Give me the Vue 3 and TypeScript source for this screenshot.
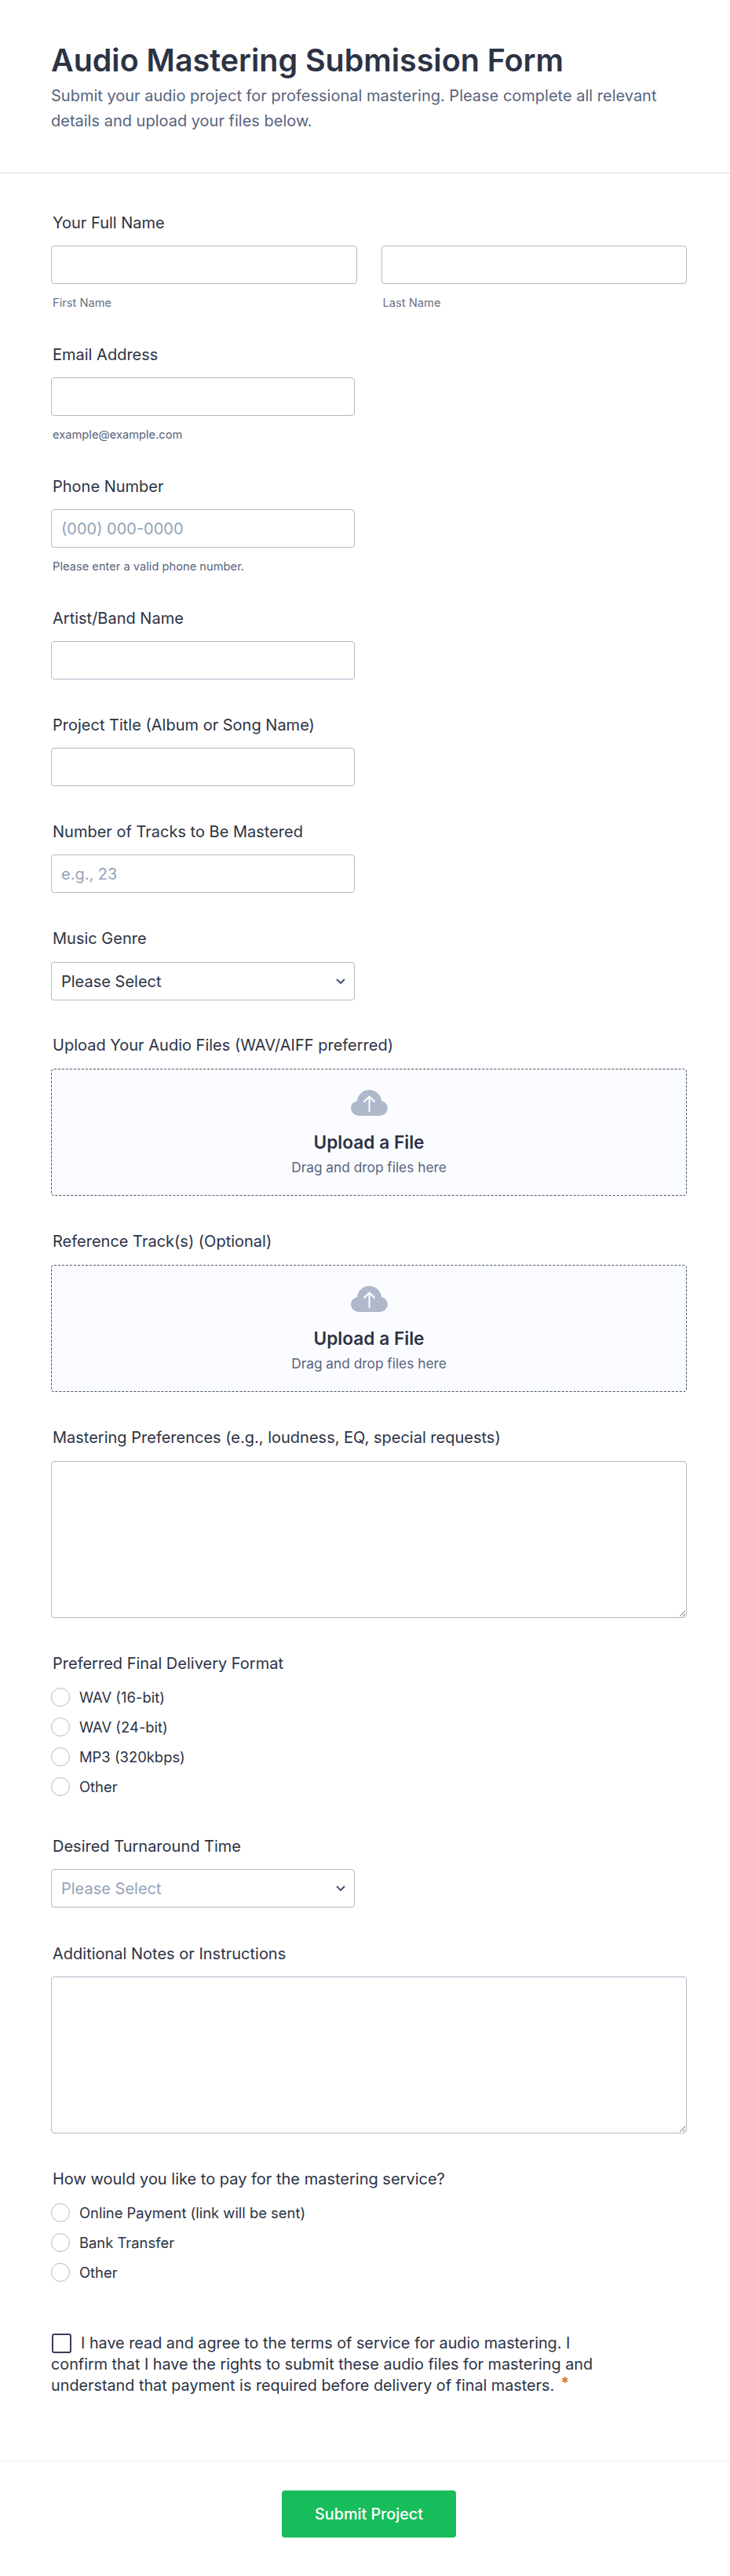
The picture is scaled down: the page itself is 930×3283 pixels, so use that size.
<script setup lang="ts">
const formatOptions = ['WAV (16-bit)', 'WAV (24-bit)', 'MP3 (320kbps)', 'Other']
const paymentOptions = ['Online Payment (link will be sent)', 'Bank Transfer', 'Other']
const uploads = ['Upload Your Audio Files (WAV/AIFF preferred)', 'Reference Track(s) (Optional)']
const cloud = 'M10 33A10 10 0 0 1 0 23.500 10 10 0 0 1 8 14 15.500 15.500 0 0 1 23.500 0 15.500 15.500 0 0 1 39 14 10 10 0 0 1 47 23.500 10 10 0 0 1 37 33Z'
</script>

<template>
  <div class="form">
    <header class="head">
      <h1>Audio Mastering Submission Form</h1>
      <p>Submit your audio project for professional mastering. Please complete all relevant details and upload your files below.</p>
    </header>

    <main class="body">
      <section class="field">
        <label>Your Full Name</label>
        <div class="name-row">
          <div class="name-col">
            <input type="text" />
            <small>First Name</small>
          </div>
          <div class="name-col">
            <input type="text" />
            <small>Last Name</small>
          </div>
        </div>
      </section>

      <section class="field">
        <label>Email Address</label>
        <input class="short" type="email" />
        <small class="blue">example@example.com</small>
      </section>

      <section class="field">
        <label>Phone Number</label>
        <input class="short" type="tel" placeholder="(000) 000-0000" />
        <small class="blue">Please enter a valid phone number.</small>
      </section>

      <section class="field">
        <label>Artist/Band Name</label>
        <input class="short" type="text" />
      </section>

      <section class="field">
        <label>Project Title (Album or Song Name)</label>
        <input class="short" type="text" />
      </section>

      <section class="field">
        <label>Number of Tracks to Be Mastered</label>
        <input class="short" type="text" placeholder="e.g., 23" />
      </section>

      <section class="field tight">
        <label class="far">Music Genre</label>
        <div class="select-wrap">
          <select>
            <option>Please Select</option>
          </select>
          <svg class="chevron" width="14" height="9" viewBox="0 0 14 9">
            <path d="M2 2l5 5 5-5" fill="none" stroke="#4a5a78" stroke-width="2.200" />
          </svg>
        </div>
      </section>

      <section v-for="title in uploads" :key="title" class="field">
        <label class="far">{{ title }}</label>
        <div class="drop">
          <svg width="47" height="33" viewBox="0 0 47 33">
            <defs>
              <pattern id="dots" width="5" height="5" patternUnits="userSpaceOnUse">
                <rect x="2" y="2" width="1" height="1" fill="#8fb3dc" />
              </pattern>
            </defs>
            <path :d="cloud" fill="#b0b8c9" />
            <path :d="cloud" fill="url(#dots)" />
            <path d="M23.500 28V9M16.500 15.500l7-7 7 7" fill="none" stroke="#fff" stroke-width="2" />
          </svg>
          <strong>Upload a File</strong>
          <span>Drag and drop files here</span>
        </div>
      </section>

      <section class="field">
        <label class="far">Mastering Preferences (e.g., loudness, EQ, special requests)</label>
        <textarea></textarea>
      </section>

      <section class="field">
        <label>Preferred Final Delivery Format</label>
        <div class="radios">
          <div v-for="opt in formatOptions" :key="opt" class="radio">
            <i></i>
            <span>{{ opt }}</span>
          </div>
        </div>
      </section>

      <section class="field wide">
        <label>Desired Turnaround Time</label>
        <div class="select-wrap">
          <select class="muted">
            <option>Please Select</option>
          </select>
          <svg class="chevron" width="14" height="9" viewBox="0 0 14 9">
            <path d="M2 2l5 5 5-5" fill="none" stroke="#4a5a78" stroke-width="2.200" />
          </svg>
        </div>
      </section>

      <section class="field">
        <label>Additional Notes or Instructions</label>
        <textarea></textarea>
      </section>

      <section class="field">
        <label>How would you like to pay for the mastering service?</label>
        <div class="radios">
          <div v-for="opt in paymentOptions" :key="opt" class="radio">
            <i></i>
            <span>{{ opt }}</span>
          </div>
        </div>
      </section>

      <p class="terms">
        <i class="box"></i>I have read and agree to the terms of service for audio mastering. I confirm that I have the rights to submit these audio files for mastering and understand that payment is required before delivery of final masters.<span class="req">*</span>
      </p>
    </main>

    <footer class="foot">
      <button type="button">Submit Project</button>
    </footer>
  </div>
</template>

<style>
body {
  background: #fff;
}
</style>

<style scoped>
.form {
  font-family: Inter, "Liberation Sans", sans-serif;
  color: #2c3345;
  width: 930px;
  height: 3283px;
  overflow: hidden;
  background: #fff;
}
.head {
  height: 221px;
  padding: 52px 65px 0;
  box-sizing: border-box;
  border-bottom: 1px solid #dcdfe8;
}
h1 {
  margin: 0 0 4px;
  font-size: 39.400px;
  line-height: 50px;
  font-weight: 600;
}
.head p {
  margin: 0;
  width: 790px;
  font-size: 20px;
  line-height: 32px;
  color: #57647e;
}
.body {
  padding: 51px 55px 0 65px;
}
.field {
  margin-bottom: 46px;
}
.tight {
  margin-bottom: 45px;
}
.wide {
  margin-bottom: 47px;
}
label {
  display: block;
  margin: 0 0 17px 2px;
  font-size: 20px;
  line-height: 24px;
  font-weight: 400;
}
.far {
  margin-bottom: 18px;
}
input,
select,
textarea {
  display: block;
  box-sizing: border-box;
  width: 100%;
  border: 1px solid #b4b9c9;
  border-radius: 4px;
  background: #fff;
  font-family: inherit;
  font-size: 20px;
  color: #2c3345;
  outline: none;
}
input,
select {
  height: 49px;
  padding: 0 12px;
}
input::placeholder {
  color: #94a3b8;
}
.short,
.select-wrap {
  width: 387px;
}
.name-row {
  display: flex;
  gap: 31px;
}
.name-col {
  flex: 1;
}
small {
  display: block;
  margin: 16px 0 0 2px;
  font-size: 14.700px;
  line-height: 16px;
  color: #6b7280;
}
.blue {
  color: #57647e;
}
.select-wrap {
  position: relative;
}
select {
  appearance: none;
}
.muted {
  color: #94a3b8;
}
.chevron {
  position: absolute;
  right: 11px;
  top: 20px;
}
.drop {
  box-sizing: border-box;
  height: 162px;
  border: 1px dashed #4a5468;
  border-radius: 4px;
  background: #fbfcff;
  display: flex;
  flex-direction: column;
  align-items: center;
  padding-top: 26px;
}
.drop strong {
  margin-top: 19px;
  font-size: 22.700px;
  line-height: 30px;
  font-weight: 600;
}
.drop span {
  margin-top: 5px;
  font-size: 17.300px;
  line-height: 24px;
  color: #57647e;
}
textarea {
  height: 200px;
  resize: vertical;
}
.radios {
  display: flex;
  flex-direction: column;
  gap: 14px;
  padding: 2px 0 6px;
}
.radio {
  display: flex;
  align-items: center;
  gap: 12px;
  height: 24px;
  font-size: 18.400px;
}
.radio i {
  box-sizing: border-box;
  width: 24px;
  height: 24px;
  border: 1px solid #b4b9c9;
  border-radius: 50%;
}
.terms {
  margin: 0;
  padding-top: 13px;
  width: 700px;
  font-size: 19.800px;
  line-height: 27px;
}
.box {
  display: inline-block;
  box-sizing: border-box;
  width: 25px;
  height: 25px;
  margin: 0 12px 0 1px;
  vertical-align: -6px;
  border: 2px solid #3b3f5e;
  border-radius: 3px;
}
.req {
  margin-left: 8px;
  font-weight: 700;
  line-height: 0;
  vertical-align: 3px;
  color: #d9782d;
}
.foot {
  margin-top: 82px;
  border-top: 1px solid #eceef3;
  padding: 37px 0 0 10px;
  display: flex;
  justify-content: center;
}
button {
  width: 222px;
  height: 60px;
  border: 0;
  border-radius: 4px;
  background: #18bd5b;
  color: #fff;
  font-family: inherit;
  font-size: 19.750px;
  font-weight: 500;
}
</style>
